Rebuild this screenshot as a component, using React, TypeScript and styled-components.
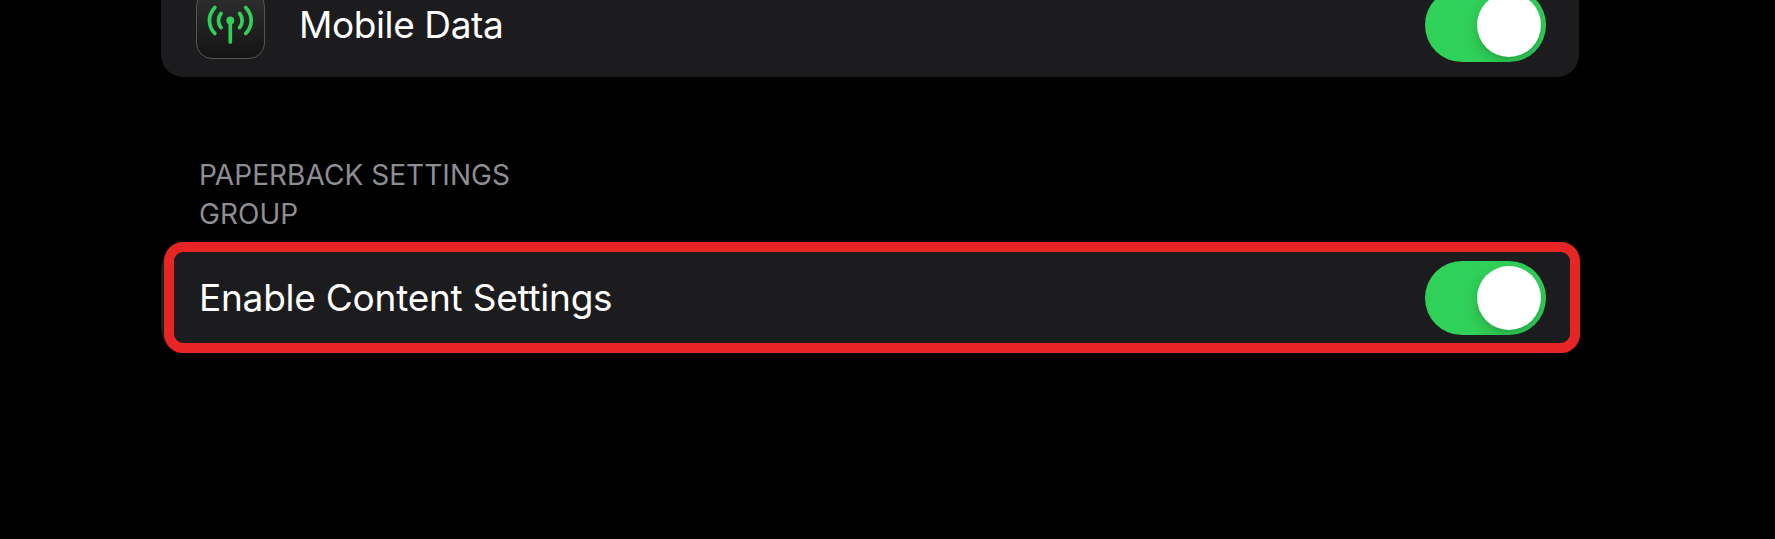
import React from "react";
import styled, { createGlobalStyle } from "styled-components";

const GlobalStyle = createGlobalStyle`
  *, *::before, *::after { box-sizing: border-box; }
  body {
    margin: 0;
    background: #000;
    overflow: hidden;
    font-family: Inter, "Liberation Sans", sans-serif;
  }
`;

const Screen = styled.main`
  display: flex;
  flex-direction: column;
  height: 539px;
  padding: 0 196px 0 161px;
  overflow: hidden;
  background: #000;
`;

const Card = styled.section`
  flex: none;
  display: flex;
  align-items: center;
  width: 1417.5px;
  height: 103px;
  padding: 0 32.5px 0 35px;
  border-radius: 22px;
  background: #1c1c1e;
`;

const ScrolledCard = styled(Card)`
  margin-top: -26.5px;
`;

const HighlightedCard = styled(Card)`
  position: relative;
  padding-left: 38px;
  &::after {
    content: "";
    position: absolute;
    left: 3px;
    top: -4.5px;
    width: 1416px;
    height: 111px;
    border: 10px solid #e82525;
    border-radius: 19px;
  }
`;

const AppIcon = styled.div`
  flex: none;
  display: flex;
  width: 69px;
  height: 69px;
  margin: -1px 34px 0 0;
  border: 1px solid #545456;
  border-radius: 16px;
  background: linear-gradient(#303032, #141414);
  svg { margin: -1px; flex: none; }
`;

const Label = styled.span<{ $spacing: number }>`
  flex: 1;
  color: #fff;
  font-size: 37px;
  line-height: 46px;
  letter-spacing: ${(p) => p.$spacing}px;
  white-space: nowrap;
`;

const GroupHeader = styled.h2`
  flex: none;
  width: 340px;
  height: 78px;
  margin: 79.5px 0 12.5px 38px;
  color: #8d8d93;
  font-size: 28px;
  font-weight: 400;
  line-height: 39px;
  letter-spacing: 0.05px;
`;

const Switch = styled.button`
  flex: none;
  display: flex;
  justify-content: flex-end;
  align-items: center;
  width: 121px;
  height: 73.5px;
  margin-top: -0.5px;
  padding: 0 5px 0 0;
  border: 0;
  border-radius: 37px;
  overflow: hidden;
  background: #30d158;
`;

const Knob = styled.span`
  width: 64px;
  height: 64px;
  border-radius: 50%;
  background: #fff;
  box-shadow: 0 6px 16px rgba(0, 0, 0, 0.17), 0 2px 3px rgba(0, 0, 0, 0.08);
`;

const Toggle = ({ label }: { label: string }) => (
  <Switch role="switch" aria-checked="true" aria-label={label}>
    <Knob />
  </Switch>
);

const AntennaGlyph = () => (
  <svg width="69" height="69" viewBox="0 0 69 69" fill="none" stroke="#30d158" strokeWidth="3.7" strokeLinecap="round">
    <circle cx="34.3" cy="30.5" r="3.9" fill="#30d158" stroke="none" />
    <path d="M34.3 30.5V52" />
    <path d="M25 23.5C21.6 27.5 21.6 33.5 25 37.5" />
    <path d="M43.6 23.5C47 27.5 47 33.5 43.6 37.5" />
    <path d="M18.9 17.5C11.6 25 11.6 36 18.9 43.5" />
    <path d="M49.7 17.5C57 25 57 36 49.7 43.5" />
  </svg>
);

export default function App() {
  return (
    <>
      <GlobalStyle />
      <Screen>
        <ScrolledCard>
          <AppIcon><AntennaGlyph /></AppIcon>
          <Label $spacing={-0.4}>Mobile Data</Label>
          <Toggle label="Mobile Data" />
        </ScrolledCard>
        <GroupHeader>PAPERBACK SETTINGS GROUP</GroupHeader>
        <HighlightedCard>
          <Label $spacing={-0.24}>Enable Content Settings</Label>
          <Toggle label="Enable Content Settings" />
        </HighlightedCard>
      </Screen>
    </>
  );
}
